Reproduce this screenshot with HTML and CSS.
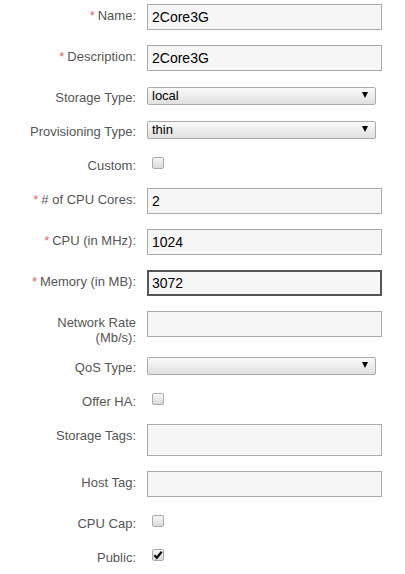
FILE: index.html
```html
<!DOCTYPE html>
<html>
<head>
<meta charset="utf-8">
<link rel="stylesheet" href="styles.css">
</head>
<body>
<div class="form">
  <div class="row"><label class="lbl"><span class="req">*</span>Name:</label><div class="field"><input class="txt" value="2Core3G"></div></div>
  <div class="row"><label class="lbl"><span class="req">*</span>Description:</label><div class="field"><input class="txt" value="2Core3G"></div></div>
  <div class="row"><label class="lbl">Storage Type:</label><div class="field"><div class="sel">local</div></div></div>
  <div class="row"><label class="lbl">Provisioning Type:</label><div class="field"><div class="sel">thin</div></div></div>
  <div class="row"><label class="lbl">Custom:</label><div class="field"><span class="cb"></span></div></div>
  <div class="row"><label class="lbl"><span class="req">*</span># of CPU Cores:</label><div class="field"><input class="txt" value="2"></div></div>
  <div class="row"><label class="lbl"><span class="req">*</span>CPU (in MHz):</label><div class="field"><input class="txt" value="1024"></div></div>
  <div class="row"><label class="lbl"><span class="req">*</span>Memory (in MB):</label><div class="field"><input class="txt focus" value="3072"></div></div>
  <div class="row row-tight"><label class="lbl">Network Rate<br>(Mb/s):</label><div class="field"><input class="txt" value=""></div></div>
  <div class="row"><label class="lbl">QoS Type:</label><div class="field"><div class="sel"></div></div></div>
  <div class="row"><label class="lbl">Offer HA:</label><div class="field"><span class="cb"></span></div></div>
  <div class="row"><label class="lbl">Storage Tags:</label><div class="field"><textarea class="txt tall"></textarea></div></div>
  <div class="row"><label class="lbl">Host Tag:</label><div class="field"><input class="txt" value=""></div></div>
  <div class="row"><label class="lbl">CPU Cap:</label><div class="field"><span class="cb"></span></div></div>
  <div class="row"><label class="lbl">Public:</label><div class="field"><span class="cb"><svg width="10" height="10" viewBox="0 0 10 10"><path d="M1.4 5.3 L3.8 7.8 L8.7 1.8" fill="none" stroke="#111" stroke-width="2.2"/></svg></span></div></div>
</div>
</body>
</html>
```
FILE: styles.css
```css
body {
  margin: 0;
  background: #fff;
  font-family: "Liberation Sans", Arial, sans-serif;
}
.form {
  padding-top: 4px;
}
.row {
  display: flex;
  align-items: flex-start;
  margin-bottom: 15px;
}
.row-tight {
  margin-bottom: 11px;
}
.lbl {
  width: 136px;
  flex: none;
  text-align: right;
  font-size: 13px;
  line-height: 15px;
  color: #555;
  padding-top: 4px;
}
.req {
  color: #e06470;
  margin-right: 3px;
}
.field {
  margin-left: 11px;
}
.txt {
  display: block;
  box-sizing: border-box;
  width: 235px;
  height: 26px;
  margin: 0;
  padding: 0 4px;
  border: 1px solid #aaa;
  border-radius: 0;
  background: #f6f6f6;
  font: 14px "Liberation Sans", Arial, sans-serif;
  color: #000;
  outline: none;
  resize: none;
}
.txt.focus {
  border: 2px solid #555;
  padding: 0 3px;
}
.txt.tall {
  height: 32px;
}
.sel {
  position: relative;
  box-sizing: border-box;
  width: 229px;
  height: 18px;
  margin-top: 1px;
  padding-left: 4px;
  border: 1px solid #aaa;
  border-radius: 2px;
  background: linear-gradient(#fafafa, #e0e0e0);
  font-size: 13px;
  line-height: 16px;
  color: #000;
}
.sel::after {
  content: "";
  position: absolute;
  right: 7px;
  top: 4px;
  border-left: 3px solid transparent;
  border-right: 3px solid transparent;
  border-top: 6px solid #000;
}
.cb {
  display: flex;
  align-items: center;
  justify-content: center;
  box-sizing: border-box;
  width: 12px;
  height: 12px;
  margin: 3px 0 4px 5px;
  border: 1px solid #aaa;
  border-radius: 2px;
  background: linear-gradient(#f6f6f6, #dadada);
}
.cb svg {
  display: block;
}
```
